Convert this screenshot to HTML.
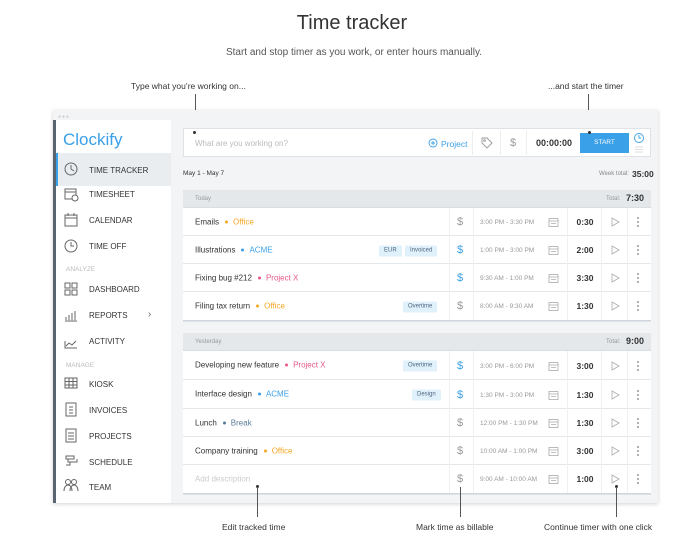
<!DOCTYPE html>
<html><head><meta charset="utf-8"><style>
*{margin:0;padding:0;box-sizing:border-box}
body{width:700px;height:542px;background:#fff;font-family:"Liberation Sans",sans-serif;position:relative;overflow:hidden;color:#333}
.a{position:absolute}
.t{white-space:nowrap}
.win{left:53px;top:110px;width:605px;height:393px;background:#f2f4f6;box-shadow:0 1px 4px rgba(0,0,0,.18)}
.side{left:53px;top:120px;width:118px;height:383px;background:#fff;border-left:3px solid #5a6470}
.nav{font-size:8px;color:#333;left:89px}
.sec{font-size:6.5px;color:#bbb;left:66px}
.panel{left:183px;width:468px;background:#fff;box-shadow:0 1px 0 #cfd6dd,0 2px 0 #dde3e8}
.hdr{height:18px;background:#e4e8eb;border-bottom:1px solid #d8dde2}
.row{position:absolute;left:0;width:468px;border-bottom:1px solid #e4e8eb;font-size:8px}
.row .d{left:12px;top:50%;transform:translateY(-50%);color:#333}
.dot{display:inline-block;width:3px;height:3px;border-radius:50%;margin:0 5px 1px 6px}
.tag{top:50%;margin-top:1px;transform:translateY(-50%);height:11px;line-height:11px;font-size:6px;background:#e1f1fb;color:#4b6780;padding:0 5px;border-radius:1px}
.ann{font-size:8.5px;color:#333}
</style></head><body>
<div class="a t" style="left:0;width:704px;text-align:center;top:12px;font-size:20px;color:#333">Time tracker</div>
<div class="a t" style="left:0;width:708px;text-align:center;top:47px;font-size:10px;color:#555">Start and stop timer as you work, or enter hours manually.</div>
<div class="a t ann" style="left:131px;top:81px">Type what you’re working on...</div>
<div class="a t ann" style="left:548px;top:81px">...and start the timer</div>
<div class="a" style="left:195px;top:94px;width:1px;height:42px;background:#555"></div>
<div class="a" style="left:588px;top:94px;width:1px;height:42px;background:#555"></div>

<div class="a win"></div>
<div class="a" style="left:58px;top:114px;font-size:5px;color:#ccc;letter-spacing:1px">●●●</div>
<div class="a side"></div>
<div class="a t" style="left:63px;top:130px;font-size:17px;color:#3aa0e8">Clockify</div>
<div class="a" style="left:56px;top:153px;width:115px;height:33px;background:#eaedf0;border-left:2px solid #3aa0e8"></div>

<svg class="a" style="left:62px;top:160px" width="18" height="340" fill="none" stroke="#666" stroke-width="1">
<circle cx="9" cy="9" r="6"/><path d="M9 5v4l3 2"/>
<rect x="3" y="29" width="11" height="10"/><path d="M3 32h11"/><circle cx="13" cy="38" r="3" fill="#fff"/>
<rect x="3" y="55" width="12" height="11"/><path d="M3 58h12M6 53v3M12 53v3"/>
<circle cx="9" cy="86" r="6"/><path d="M9 82v4h3"/>
<rect x="3" y="123" width="5" height="5"/><rect x="10" y="123" width="5" height="5"/><rect x="3" y="130" width="5" height="5"/><rect x="10" y="130" width="5" height="5"/>
<path d="M3 161h12M4 160v-3M7 160v-5M10 160v-7M13 160v-9"/>
<path d="M3 181v7h12M4 186l3-3 3 2 4-4"/>
<rect x="3" y="218" width="12" height="10"/><path d="M3 221.5h12M3 225h12M7 218v10M11 218v10"/>
<rect x="4" y="243" width="10" height="13"/><path d="M7 247h4M7 250h4M7 253h4"/>
<rect x="4" y="269" width="10" height="13"/><path d="M6 273h6M6 276h6M6 279h6"/>
<path d="M4 296h8v3H4zM6 299v3h9v-3M8 302v3H4"/>
<circle cx="6" cy="322" r="2.5"/><circle cx="12" cy="322" r="2.5"/><path d="M2 331c0-4 2-6 4-6s4 2 4 6M8 331c0-4 2-6 4-6s4 2 4 6"/>
</svg>
<div class="a t nav" style="top:166px">TIME TRACKER</div>
<div class="a t nav" style="top:190px">TIMESHEET</div>
<div class="a t nav" style="top:216px">CALENDAR</div>
<div class="a t nav" style="top:242px">TIME OFF</div>
<div class="a t sec" style="top:266px">ANALYZE</div>
<div class="a t nav" style="top:285px">DASHBOARD</div>
<div class="a t nav" style="top:311px">REPORTS</div>
<div class="a t" style="left:148px;top:309px;font-size:10px;color:#666">›</div>
<div class="a t nav" style="top:337px">ACTIVITY</div>
<div class="a t sec" style="top:362px">MANAGE</div>
<div class="a t nav" style="top:380px">KIOSK</div>
<div class="a t nav" style="top:406px">INVOICES</div>
<div class="a t nav" style="top:432px">PROJECTS</div>
<div class="a t nav" style="top:458px">SCHEDULE</div>
<div class="a t nav" style="top:483px">TEAM</div>

<div class="a" style="left:183px;top:128px;width:468px;height:29px;background:#fff;border:1px solid #dfe3e7"></div>
<div class="a" style="left:193px;top:131px;width:3px;height:3px;border-radius:50%;background:#333"></div>
<div class="a t" style="left:195px;top:139px;font-size:8px;color:#bbb">What are you working on?</div>
<svg class="a" style="left:428px;top:138px" width="10" height="10" fill="none" stroke="#3aa0e8" stroke-width="0.9"><circle cx="5" cy="5" r="4"/><path d="M5 3v4M3 5h4"/></svg>
<div class="a t" style="left:441px;top:139px;font-size:8.5px;color:#3aa0e8">Project</div>
<div class="a" style="left:472px;top:131px;width:1px;height:24px;background:#eee"></div>
<svg class="a" style="left:481px;top:137px" width="12" height="12" fill="none" stroke="#999" stroke-width="0.9"><path d="M1 1h5l5 5-5 5-5-5z"/><circle cx="3.5" cy="3.5" r="0.8"/></svg>
<div class="a" style="left:500px;top:131px;width:1px;height:24px;background:#eee"></div>
<div class="a t" style="left:510px;top:137px;font-size:11px;color:#999">$</div>
<div class="a" style="left:526px;top:131px;width:1px;height:24px;background:#eee"></div>
<div class="a t" style="left:536px;top:138px;font-size:9px;font-weight:bold;color:#333">00:00:00</div>
<div class="a t" style="left:580px;top:133px;width:49px;height:20px;background:#3aa0e8;color:#fff;font-size:6.5px;text-align:center;line-height:20px">START</div>
<div class="a" style="left:588px;top:131px;width:3px;height:3px;border-radius:50%;background:#333"></div>
<svg class="a" style="left:633px;top:132px" width="12" height="22" fill="none" stroke="#3aa0e8" stroke-width="0.9"><circle cx="6" cy="6" r="4.5"/><path d="M6 3v3h2"/><path d="M2 15h8M2 17.5h8M2 20h8" stroke="#ddd"/></svg>

<div class="a t" style="left:183px;top:170px;font-size:6.5px;color:#333">May 1 - May 7</div>
<div class="a t" style="left:599px;top:171px;font-size:6px;color:#888">Week total:</div>
<div class="a t" style="left:632px;top:169px;font-size:8.5px;font-weight:bold;color:#333">35:00</div>

<div class="a panel" style="top:190px;height:130px">
 <div class="hdr" style="position:relative"><span class="a t" style="left:12px;top:6px;font-size:6px;color:#999">Today</span><span class="a t" style="left:423px;top:6px;font-size:6px;color:#999">Total:</span><span class="a t" style="left:443px;top:3px;font-size:9px;font-weight:bold">7:30</span></div>
 <div class="row" style="top:18px;height:28px"><span class="a t d">Emails<span class="dot" style="background:#f5a623"></span><span style="color:#f5a623">Office</span></span></div>
 <div class="row" style="top:46px;height:28px"><span class="a t d">Illustrations<span class="dot" style="background:#3aa0e8"></span><span style="color:#3aa0e8">ACME</span></span><span class="a t tag" style="left:196px">EUR</span><span class="a t tag" style="left:222px">Invoiced</span></div>
 <div class="row" style="top:74px;height:28px"><span class="a t d">Fixing bug #212<span class="dot" style="background:#e8588a"></span><span style="color:#e8588a">Project X</span></span></div>
 <div class="row" style="top:102px;height:28px;border-bottom:none"><span class="a t d">Filing tax return<span class="dot" style="background:#f5a623"></span><span style="color:#f5a623">Office</span></span><span class="a t tag" style="left:220px">Overtime</span></div>
</div>

<div class="a panel" style="top:333px;height:160px">
 <div class="hdr" style="position:relative"><span class="a t" style="left:12px;top:6px;font-size:6px;color:#999">Yesterday</span><span class="a t" style="left:423px;top:6px;font-size:6px;color:#999">Total:</span><span class="a t" style="left:443px;top:3px;font-size:9px;font-weight:bold">9:00</span></div>
 <div class="row" style="top:18px;height:29px"><span class="a t d">Developing new feature<span class="dot" style="background:#e8588a"></span><span style="color:#e8588a">Project X</span></span><span class="a t tag" style="left:220px">Overtime</span></div>
 <div class="row" style="top:47px;height:29px"><span class="a t d">Interface design<span class="dot" style="background:#3aa0e8"></span><span style="color:#3aa0e8">ACME</span></span><span class="a t tag" style="left:229px">Design</span></div>
 <div class="row" style="top:76px;height:28px"><span class="a t d">Lunch<span class="dot" style="background:#5a7a9a"></span><span style="color:#5a7a9a">Break</span></span></div>
 <div class="row" style="top:104px;height:28px"><span class="a t d">Company training<span class="dot" style="background:#f5a623"></span><span style="color:#f5a623">Office</span></span></div>
 <div class="row" style="top:132px;height:28px;border-bottom:none"><span class="a t d" style="color:#ccc">Add description</span></div>
</div>

<div id="cols"></div>
<script>
var tops=[208,236,264,292,351,380,409,437,465],hs=[28,28,28,28,29,29,28,28,28];
var times=["3:00 PM - 3:30 PM","1:00 PM - 3:00 PM","9:30 AM - 1:00 PM","8:00 AM - 9:30 AM","3:00 PM - 6:00 PM","1:30 PM - 3:00 PM","12:00 PM - 1:30 PM","10:00 AM - 1:00 PM","9:00 AM - 10:00 AM"];
var durs=["0:30","2:00","3:30","1:30","3:00","1:30","1:30","3:00","1:00"];
var blue=[0,1,1,0,1,1,0,0,0];
var h="";
for(var i=0;i<9;i++){var t=tops[i],c=t+hs[i]/2;
[449,473,567,601,627].forEach(function(x){h+='<div class="a" style="left:'+x+'px;top:'+t+'px;width:1px;height:'+hs[i]+'px;background:#eef0f2"></div>';});
h+='<div class="a t" style="left:457px;top:'+(c-6)+'px;font-size:11px;color:'+(blue[i]?'#3aa0e8':'#999')+'">$</div>';
h+='<div class="a t" style="left:480px;top:'+(c-3)+'px;font-size:6.5px;color:#999">'+times[i]+'</div>';
h+='<svg class="a" style="left:548px;top:'+(c-5)+'px" width="11" height="10" fill="none" stroke="#aaa" stroke-width="0.8"><rect x="1" y="1.5" width="9" height="8"/><path d="M1 4h9M3 6.5h5"/></svg>';
h+='<div class="a t" style="left:573px;width:24px;text-align:center;top:'+(c-5)+'px;font-size:8.5px;font-weight:bold">'+durs[i]+'</div>';
h+='<svg class="a" style="left:611px;top:'+(c-5)+'px" width="9" height="10" fill="none" stroke="#aaa" stroke-width="0.8"><path d="M1 1l7 4-7 4z"/></svg>';
h+='<svg class="a" style="left:636px;top:'+(c-6)+'px" width="4" height="12" fill="#aaa"><circle cx="2" cy="2" r="1.1"/><circle cx="2" cy="6" r="1.1"/><circle cx="2" cy="10" r="1.1"/></svg>';}
document.getElementById('cols').innerHTML=h;
</script>

<div class="a" style="left:256px;top:485px;width:3px;height:3px;border-radius:50%;background:#333"></div>
<div class="a" style="left:257px;top:487px;width:1px;height:30px;background:#555"></div>
<div class="a" style="left:460px;top:487px;width:1px;height:30px;background:#555"></div>
<div class="a" style="left:615px;top:485px;width:3px;height:3px;border-radius:50%;background:#333"></div>
<div class="a" style="left:616px;top:487px;width:1px;height:30px;background:#555"></div>
<div class="a t ann" style="left:222px;top:522px">Edit tracked time</div>
<div class="a t ann" style="left:416px;top:522px">Mark time as billable</div>
<div class="a t ann" style="left:544px;top:522px">Continue timer with one click</div>
</body></html>
